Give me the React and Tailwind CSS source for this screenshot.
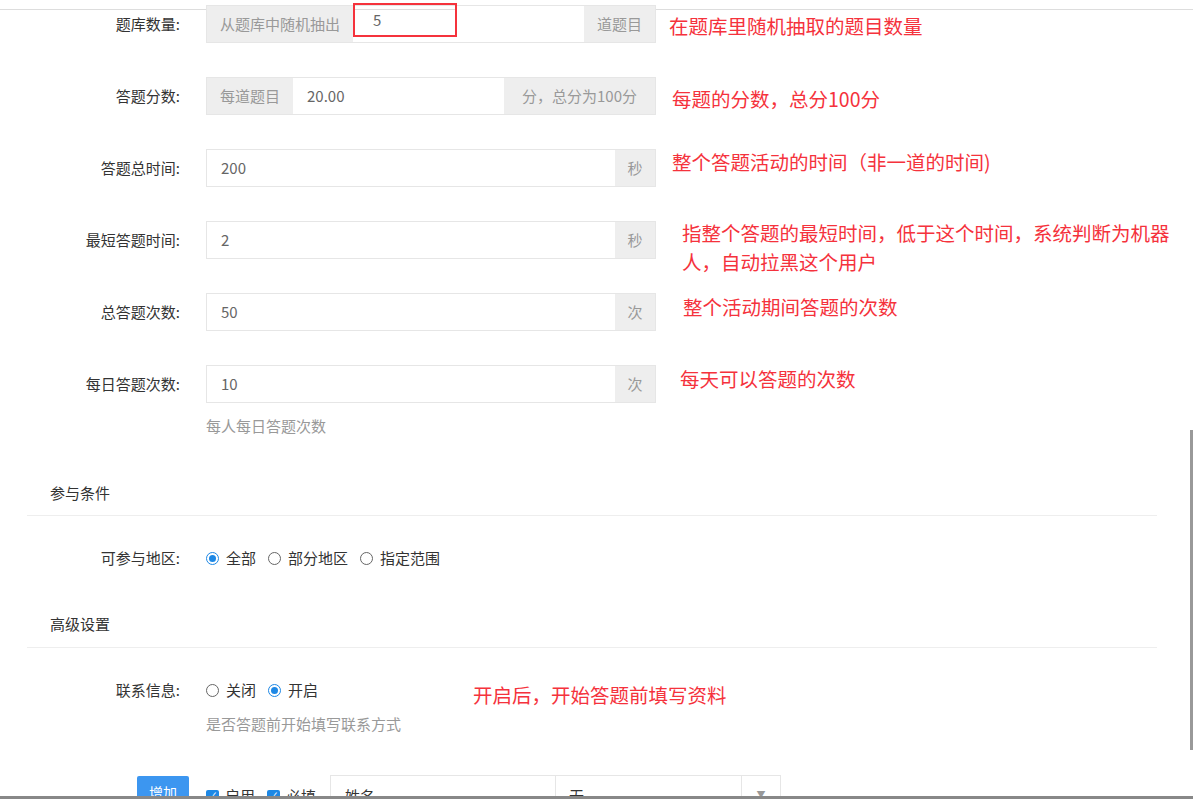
export default function App() {
  const F = { fontFamily: '"Noto Sans CJK SC","Liberation Sans",sans-serif' };
  const Row = ({ label, top, children, note, noteCls }) => (
    <div className="relative flex items-center h-[38px]" style={{ marginTop: top }}>
      <div className="w-[182px] text-right text-[15px] text-[#333] pr-[2px]">{label}</div>
      <div className="ml-[24px] w-[450px] h-[38px] flex border border-[#e6e6e6] text-[15px]">{children}</div>
      {note && <div className={"absolute text-[19.5px] text-[#f5323c] " + noteCls}>{note}</div>}
    </div>
  );
  const Addon = ({ t, w }) => <div className={"bg-[#eeeeee] text-[#999] flex items-center justify-center " + w}>{t}</div>;
  const Val = ({ t }) => <div className="flex-1 flex items-center px-[14px] text-[#666] bg-white">{t}</div>;
  const Radio = ({ on, t }) => (
    <span className="flex items-center gap-[7px] mr-[12px]">
      <span className={"w-[13px] h-[13px] rounded-full border flex items-center justify-center " + (on ? "border-[#1e88e5]" : "border-[#666]")}>
        {on && <span className="w-[7px] h-[7px] rounded-full bg-[#1e88e5]" />}
      </span>
      <span className="text-[15px] text-[#333]">{t}</span>
    </span>
  );
  const Check = ({ t }) => (
    <span className="flex items-center gap-[6px] mr-[12px]">
      <span className="w-[13px] h-[13px] rounded-[2px] bg-[#1e88e5] flex items-center justify-center text-white text-[10px] leading-none">✓</span>
      <span className="text-[15px] text-[#333]">{t}</span>
    </span>
  );
  return (
    <div className="relative w-[1193px] h-[799px] bg-white overflow-hidden" style={F}>
      <div className="h-[10px] border-b border-[#dddddd]" />
      <div className="absolute right-0 top-[430px] w-[3px] h-[320px] bg-[#999]" />
      <div className="absolute left-0 right-0 bottom-0 h-[3px] bg-[#888] z-10" />
      <div className="relative">
        <Row label="题库数量:" top={-5} note="在题库里随机抽取的题目数量" noteCls="left-[669px] top-[6px]">
          <Addon t="从题库中随机抽出" w="w-[146px]" />
          <div className="w-[104px] border-2 border-[#f5323c] flex items-center px-[18px] text-[#666] h-[34px] -mt-[3px]">5</div>
          <Val t="" />
          <Addon t="道题目" w="w-[71px]" />
        </Row>
        <Row label="答题分数:" top={34} note="每题的分数，总分100分" noteCls="left-[672px] top-[7px]">
          <Addon t="每道题目" w="w-[86px]" />
          <Val t="20.00" />
          <Addon t="分，总分为100分" w="w-[151px]" />
        </Row>
        <Row label="答题总时间:" top={34} note="整个答题活动的时间（非一道的时间)" noteCls="left-[672px] top-[-2px]">
          <Val t="200" /><Addon t="秒" w="w-[40px]" />
        </Row>
        <Row label="最短答题时间:" top={34} note={<>指整个答题的最短时间，低于这个时间，系统判断为机器<br />人，自动拉黑这个用户</>} noteCls="left-[682px] top-[-3px] leading-[29px] whitespace-nowrap">
          <Val t="2" /><Addon t="秒" w="w-[40px]" />
        </Row>
        <Row label="总答题次数:" top={34} note="整个活动期间答题的次数" noteCls="left-[683px] top-[-1px]">
          <Val t="50" /><Addon t="次" w="w-[40px]" />
        </Row>
        <Row label="每日答题次数:" top={34} note="每天可以答题的次数" noteCls="left-[680px] top-[-1px]">
          <Val t="10" /><Addon t="次" w="w-[40px]" />
        </Row>
        <div className="ml-[206px] mt-[12px] text-[15px] text-[#999]">每人每日答题次数</div>
        <div className="mt-[44px] ml-[27px] w-[1130px] border-b border-[#eeeeee] pb-[11px] pl-[23px] text-[15px] text-[#333]">参与条件</div>
        <div className="flex items-center mt-[31px] h-[22px]">
          <div className="w-[182px] text-right text-[15px] text-[#333] pr-[2px]">可参与地区:</div>
          <div className="ml-[24px] flex"><Radio on t="全部" /><Radio t="部分地区" /><Radio t="指定范围" /></div>
        </div>
        <div className="mt-[44px] ml-[27px] w-[1130px] border-b border-[#eeeeee] pb-[11px] pl-[23px] text-[15px] text-[#333]">高级设置</div>
        <div className="relative flex items-center mt-[32px] h-[22px]">
          <div className="w-[182px] text-right text-[15px] text-[#333] pr-[2px]">联系信息:</div>
          <div className="ml-[24px] flex"><Radio t="关闭" /><Radio on t="开启" /></div>
          <div className="absolute left-[473px] top-[0px] text-[19.5px] text-[#f5323c]">开启后，开始答题前填写资料</div>
        </div>
        <div className="ml-[206px] mt-[11px] text-[15px] text-[#999]">是否答题前开始填写联系方式</div>
        <div className="flex items-start mt-[40px] ml-[137px]">
          <div className="w-[52px] h-[32px] bg-[#3c96f0] rounded-[2px] text-white text-[14px] flex items-center justify-center mt-[1px]">增加</div>
          <div className="flex items-center ml-[17px] mt-[10px]"><Check t="启用" /><Check t="必填" /></div>
          <div className="ml-[2px] w-[226px] h-[40px] border border-[#e6e6e6] px-[14px] pt-[9px] text-[15px] text-[#333]">姓名</div>
          <div className="w-[225px] h-[40px] border border-l-0 border-[#e6e6e6] flex">
            <div className="flex-1 px-[13px] pt-[9px] text-[15px] text-[#333]">无</div>
            <div className="w-[39px] border-l border-[#e6e6e6] flex items-center justify-center text-[#999] text-[9px]">▼</div>
          </div>
        </div>
      </div>
    </div>
  );
}
